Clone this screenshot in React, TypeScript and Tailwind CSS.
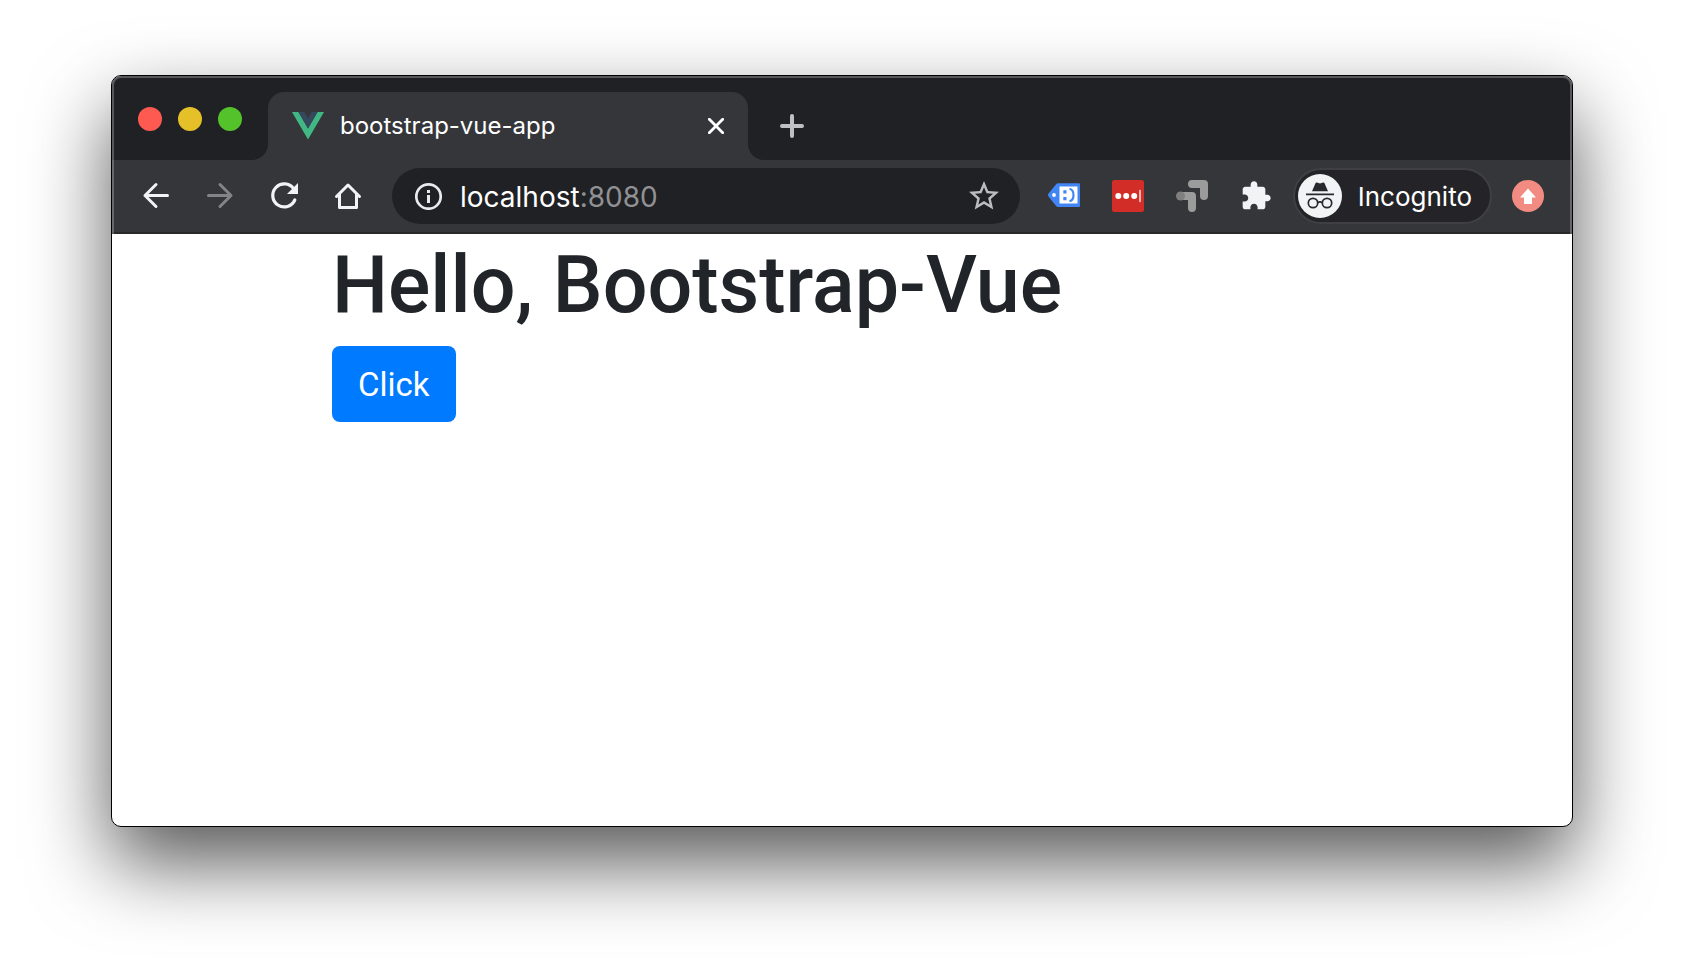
import type { ReactNode } from "react";

function TabFlare({ flip = false }: { flip?: boolean }) {
  return (
    <svg
      viewBox="0 0 16 16"
      aria-hidden="true"
      className={flip ? "size-4 shrink-0 self-end -scale-x-100" : "size-4 shrink-0 self-end"}
    >
      <path d="M16 0v16H0C8.800 16 16 8.800 16 0z" fill="#35363a" />
    </svg>
  );
}

function ToolButton({ label, children, disabled = false }: { label: string; children: ReactNode; disabled?: boolean }) {
  return (
    <button type="button" aria-label={label} disabled={disabled} className="flex size-8 shrink-0 items-center justify-center">
      {children}
    </button>
  );
}

function TabStrip() {
  return (
    <div className="flex h-[84px] items-end bg-[#202124]">
      <div className="flex items-center gap-4 self-center pt-0.5 pl-[26px]">
        <button type="button" aria-label="Close window" className="size-6 rounded-full bg-[#ff5a52]" />
        <button type="button" aria-label="Minimize window" className="size-6 rounded-full bg-[#e6c029]" />
        <button type="button" aria-label="Zoom window" className="size-6 rounded-full bg-[#53c22b]" />
      </div>
      <div className="ml-[10px] flex">
        <TabFlare />
        <div className="flex h-[68px] w-[480px] items-center rounded-t-2xl bg-[#35363a] pr-6 pl-6">
          <svg viewBox="0 0 32 28" className="h-7 w-8 shrink-0" aria-hidden="true">
            <path d="M0 0h6.400L16 16.600 25.600 0H32L16 27.600z" fill="#41b883" />
            <path d="M6.400 0h5.900L16 6.400 19.700 0h5.900L16 16.600z" fill="#35495e" />
          </svg>
          <span className="ml-4 flex-1 text-[24px] leading-8 text-white">bootstrap-vue-app</span>
          <button type="button" aria-label="Close tab" className="flex size-4 items-center justify-center">
            <svg viewBox="0 0 16 16" className="size-4" aria-hidden="true">
              <path d="M1.300 1.300l13.400 13.400M14.700 1.300L1.300 14.700" stroke="#fff" strokeWidth="2.800" strokeLinecap="round" />
            </svg>
          </button>
        </div>
        <TabFlare flip />
      </div>
      <button type="button" aria-label="New tab" className="ml-4 flex h-[68px] w-6 items-center justify-center">
        <svg viewBox="0 0 24 24" className="size-6" aria-hidden="true">
          <path d="M12 2v20M2 12h20" stroke="#bdc1c6" strokeWidth="4" strokeLinecap="round" />
        </svg>
      </button>
    </div>
  );
}

function AddressBar() {
  return (
    <div className="ml-7 flex h-14 min-w-0 flex-1 items-center rounded-full bg-[#202124] pr-5 pl-[22px]">
      <svg viewBox="0 0 28 28" className="size-7 shrink-0" fill="none" aria-hidden="true">
        <circle cx="14.500" cy="14.500" r="12.200" stroke="#e8eaed" strokeWidth="2.700" />
        <path d="M14.500 13v8M14.500 8v3" stroke="#e8eaed" strokeWidth="3" />
      </svg>
      <span className="ml-[18px] flex-1 pt-0.5 text-[28px] leading-9 text-white">
        localhost<span className="text-[#909194]">:8080</span>
      </span>
      <ToolButton label="Bookmark this page">
        <svg viewBox="0 0 24 24" className="size-9 shrink-0" fill="#bcbdbf" aria-hidden="true">
          <path d="M22 9.240l-7.190-.62L12 2 9.190 8.630 2 9.240l5.460 4.730L5.820 21 12 17.270 18.180 21l-1.630-7.030L22 9.240zM12 15.400l-3.760 2.270 1-4.280-3.320-2.880 4.380-.38L12 6.100l1.710 4.040 4.380.38-3.320 2.880 1 4.280L12 15.400z" />
        </svg>
      </ToolButton>
    </div>
  );
}

function Toolbar() {
  return (
    <div className="flex h-[74px] items-center border-b-2 border-[#28282b] bg-[#35363a] pr-7 pl-7">
      <div className="flex gap-8">
        <ToolButton label="Back">
          <svg viewBox="0 0 32 32" className="size-8" fill="none" stroke="#f1f3f4" strokeWidth="3" strokeLinecap="round" strokeLinejoin="round" aria-hidden="true">
            <path d="M27.500 15.500H5M16 4.500l-11 11 11 11" />
          </svg>
        </ToolButton>
        <ToolButton label="Forward" disabled>
          <svg viewBox="0 0 32 32" className="size-8" fill="none" stroke="#838487" strokeWidth="3" strokeLinecap="round" strokeLinejoin="round" aria-hidden="true">
            <path d="M4.500 15.500H27M16 4.500l11 11-11 11" />
          </svg>
        </ToolButton>
        <ToolButton label="Reload">
          <svg viewBox="0 0 32 32" className="size-8" aria-hidden="true">
            <path d="M25.500 8.600A11.500 11.500 0 1 0 26.800 20" fill="none" stroke="#f1f3f4" strokeWidth="3.200" strokeLinecap="round" />
            <path d="M30 3v11H19z" fill="#f1f3f4" />
          </svg>
        </ToolButton>
        <ToolButton label="Home">
          <svg viewBox="0 0 32 32" className="size-8" fill="none" stroke="#f1f3f4" strokeWidth="3" strokeLinecap="round" strokeLinejoin="round" aria-hidden="true">
            <path d="M4.500 16.500L16 5l11.500 11.500M7.500 14.500v13h17v-13" />
          </svg>
        </ToolButton>
      </div>
      <AddressBar />
      <div className="ml-7 flex gap-8">
        <ToolButton label="Tag extension">
          <svg viewBox="0 0 32 32" className="size-8" aria-hidden="true">
            <path d="M10 3.300h21a1 1 0 0 1 1 1v21.700a1 1 0 0 1-1 1H10q-1 0-1.700-.8L.5 16.500q-1-1.500 0-3l7.800-9.400Q9 3.300 10 3.300z" fill="#4285f4" />
            <circle cx="6" cy="15" r="1.900" fill="#fff" />
            <path d="M11.500 6.500h18v17h-18z" fill="#fff" />
            <path d="M15.300 10.300h3.200v3.200h-3.200zM15.300 17h3.200v3.200h-3.200z" fill="#4285f4" />
            <path d="M21.500 8.700q4 1 4 6.300t-4 6.300" fill="none" stroke="#4285f4" strokeWidth="2.200" />
          </svg>
        </ToolButton>
        <ToolButton label="Password manager">
          <svg viewBox="0 0 32 32" className="size-8" aria-hidden="true">
            <rect width="32" height="32" rx="2.500" fill="#d32d27" />
            <circle cx="6.300" cy="16" r="3" fill="#fff" />
            <circle cx="14.200" cy="16" r="3" fill="#fff" />
            <circle cx="22.200" cy="16" r="3" fill="#fff" />
            <path d="M28 10.500v11" stroke="#fff" strokeWidth="1.300" strokeLinecap="round" />
          </svg>
        </ToolButton>
        <ToolButton label="Tag assistant">
          <svg viewBox="0 0 32 32" className="size-8" fill="none" strokeWidth="8" strokeLinecap="round" strokeLinejoin="round" aria-hidden="true">
            <path d="M16 4h12v12M5 16h11v12" stroke="#9b9b9b" />
            <circle cx="4.500" cy="16" r="4.500" fill="#7f7f7f" />
          </svg>
        </ToolButton>
        <ToolButton label="Extensions">
          <svg viewBox="0 0 24 24" className="size-8" fill="#f1f3f4" aria-hidden="true">
            <path d="M20.500 11H19V7c0-1.100-.9-2-2-2h-4V3.500C13 2.120 11.880 1 10.500 1S8 2.120 8 3.500V5H4c-1.100 0-1.990.9-1.990 2v3.800H3.500c1.490 0 2.700 1.210 2.700 2.700s-1.210 2.700-2.700 2.700H2V20c0 1.100.9 2 2 2h3.800v-1.500c0-1.490 1.210-2.700 2.700-2.700 1.490 0 2.700 1.210 2.700 2.700V22H17c1.100 0 2-.9 2-2v-4h1.500c1.380 0 2.500-1.120 2.500-2.500S21.880 11 20.500 11z" />
          </svg>
        </ToolButton>
      </div>
      <button type="button" className="ml-[21px] flex h-14 items-center rounded-full border-2 border-[#3f4044] bg-[#242428] pr-[18px] pl-[3px]">
        <svg viewBox="0 0 44 44" className="size-11 shrink-0" aria-hidden="true">
          <circle cx="22" cy="22" r="22" fill="#f1f3f4" />
          <path d="M14 17.300l3.500-8q.4-1 1.500-.7l3 .9 3-.9q1.100-.3 1.500.7l3.500 8z" fill="#28292c" />
          <path d="M8 20.300h28" stroke="#28292c" strokeWidth="1.700" />
          <g fill="none" stroke="#28292c" strokeWidth="1.700">
            <circle cx="15" cy="29" r="4.700" />
            <circle cx="29" cy="29" r="4.700" />
            <path d="M19.700 28.500q2.300-1.400 4.600 0" />
          </g>
        </svg>
        <span className="ml-4 pt-0.5 text-[26px] leading-9 text-white">Incognito</span>
      </button>
      <button type="button" aria-label="Update browser" className="ml-5 size-8 shrink-0">
        <svg viewBox="0 0 32 32" className="size-8" aria-hidden="true">
          <circle cx="16" cy="16" r="16" fill="#f28b82" />
          <path d="M16 8.500l8 9h-4V24h-8v-6.500H8z" fill="#fff" />
        </svg>
      </button>
    </div>
  );
}

export default function App() {
  return (
    <div className="min-h-screen bg-white px-[111px] pt-[75px] pb-[147px] font-[Inter,'Liberation_Sans',sans-serif]">
      <div className="overflow-hidden rounded-[10px] border border-black bg-white shadow-[0_36px_80px_rgba(0,0,0,0.66)]">
        <header className="relative">
          <TabStrip />
          <Toolbar />
          <div className="pointer-events-none absolute inset-0 rounded-t-[9px] border-x-2 border-t-2 border-white/25" />
        </header>
        <main className="min-h-[592px] font-[Roboto,'Liberation_Sans',sans-serif]">
          <div className="mx-auto max-w-[1080px] px-[30px]">
            <h1 className="mb-2.5 text-[79px] leading-[102px] font-medium text-[#212529]">Hello, Bootstrap-Vue</h1>
            <button type="button" className="h-[76px] rounded-lg bg-[#007bff] px-[26px] pt-0.5 text-[33px] leading-[48px] text-white">
              Click
            </button>
          </div>
        </main>
      </div>
    </div>
  );
}
